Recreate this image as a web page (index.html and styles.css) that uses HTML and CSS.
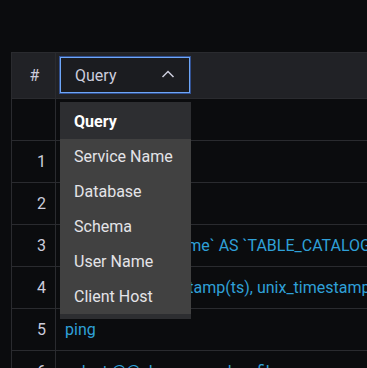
FILE: index.html
```html
<!DOCTYPE html>
<html lang="en">
<head>
    <meta charset="UTF-8">
    <meta name="viewport" content="width=device-width, initial-scale=1.0">
    <title>Queries</title>
    <link rel="stylesheet" href="styles.css">
</head>
<body>
    <div class="panel">
        <div class="head">
            <div class="num-cell">#</div>
            <div class="col-cell">
                <div class="select">
                    <span>Query</span>
                    <svg class="chevron" width="14" height="8" viewBox="0 0 14 8">
                        <path d="M1.5 7 L7 1.5 L12.5 7" fill="none" stroke="#ccccdc" stroke-width="1.5"/>
                    </svg>
                </div>
            </div>
        </div>
        <div class="row"><div class="num-cell"></div><div class="text-cell"></div></div>
        <div class="row"><div class="num-cell">1</div><div class="text-cell">select 1</div></div>
        <div class="row"><div class="num-cell">2</div><div class="text-cell">show tables</div></div>
        <div class="row"><div class="num-cell">3</div><div class="text-cell">select `catalogname` AS `TABLE_CATALOG`, `schema_name`</div></div>
        <div class="row"><div class="num-cell">4</div><div class="text-cell">select unix_timestamp(ts), unix_timestamp(now())</div></div>
        <div class="row"><div class="num-cell">5</div><div class="text-cell">ping</div></div>
        <div class="row"><div class="num-cell">6</div><div class="text-cell">select @@slow_query_log_file</div></div>

        <ul class="menu">
            <li class="current">Query</li>
            <li>Service Name</li>
            <li>Database</li>
            <li>Schema</li>
            <li>User Name</li>
            <li>Client Host</li>
        </ul>
    </div>
</body>
</html>
```
FILE: styles.css
```css
body {
    margin: 0;
    background-color: #0b0c0e;
    font-family: Roboto, "Liberation Sans", sans-serif;
    font-size: 16px;
    color: #ccccdc;
    overflow: hidden;
}
.panel {
    position: relative;
    margin: 52px 0 0 11px;
    border-left: 1px solid #2a2b2f;
    border-top: 1px solid #2a2b2f;
}
.head {
    display: flex;
    height: 45px;
    background-color: #212226;
    border-bottom: 1px solid #2a2b2f;
}
.num-cell {
    width: 44px;
    flex: none;
    border-right: 1px solid #2a2b2f;
    display: flex;
    align-items: center;
    justify-content: flex-end;
    padding-right: 9px;
    box-sizing: border-box;
}
.head .num-cell {
    justify-content: center;
    padding-right: 0;
    padding-left: 2px;
}
.col-cell {
    padding: 3px 0 0 3px;
}
.select {
    width: 130px;
    height: 36px;
    box-sizing: border-box;
    border: 1px solid #6ea6f8;
    box-shadow: 0 0 0 1px rgba(61, 113, 217, 0.6);
    background-color: #1b1c20;
    margin-left: 1px;
    margin-top: 1px;
    display: flex;
    align-items: center;
    justify-content: space-between;
    padding: 0 14px 0 14px;
}
.chevron {
    margin-top: -2px;
}
.row {
    display: flex;
    height: 41px;
    border-bottom: 1px solid #2a2b2f;
}
.text-cell {
    padding-left: 9px;
    display: flex;
    align-items: center;
    white-space: nowrap;
    color: #2fa0d8;
}
.menu {
    position: absolute;
    top: 49px;
    left: 48px;
    width: 131px;
    margin: 0;
    padding: 2px 0 5px;
    list-style: none;
    background-color: #2d2e31;
    color: #e4e4e8;
}
.menu li {
    height: 35px;
    line-height: 35px;
    padding-left: 14px;
    background-color: #414141;
}
.menu li.current {
    background-color: transparent;
    font-weight: bold;
    color: #fff;
}
```
